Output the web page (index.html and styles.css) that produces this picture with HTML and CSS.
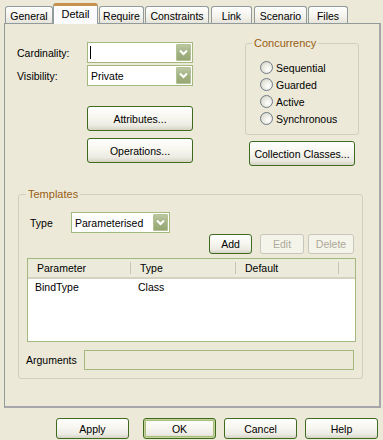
FILE: index.html
```html
<!DOCTYPE html>
<html lang="en">
<head>
  <meta charset="UTF-8">
  <title>Class Properties - Detail</title>
  <link rel="stylesheet" href="styles.css">
</head>
<body>
  <div class="dialog">
    <div class="tabs">
      <div class="tab t-general">General</div>
      <div class="tab t-detail active">Detail</div>
      <div class="tab t-require">Require</div>
      <div class="tab t-constraints">Constraints</div>
      <div class="tab t-link">Link</div>
      <div class="tab t-scenario">Scenario</div>
      <div class="tab t-files">Files</div>
    </div>

    <div class="panel">
      <div class="top">
        <div class="left">
          <div class="field">
            <span class="label">Cardinality:</span>
            <div class="combo wide">
              <span class="cursor"></span>
              <span class="drop"><svg width="15" height="17" viewBox="0 0 15 17"><path d="M4 6.5 L7.5 10 L11 6.5" fill="none" stroke="#fff" stroke-width="2"/></svg></span>
            </div>
          </div>
          <div class="field">
            <span class="label">Visibility:</span>
            <div class="combo wide">
              <span class="value">Private</span>
              <span class="drop"><svg width="15" height="17" viewBox="0 0 15 17"><path d="M4 6.5 L7.5 10 L11 6.5" fill="none" stroke="#fff" stroke-width="2"/></svg></span>
            </div>
          </div>
          <div class="side-btns">
            <button class="btn big">Attributes...</button>
            <button class="btn big">Operations...</button>
          </div>
        </div>

        <div class="right">
          <fieldset class="group concurrency">
            <legend>Concurrency</legend>
            <div class="radio"><span class="dot"></span>Sequential</div>
            <div class="radio"><span class="dot"></span>Guarded</div>
            <div class="radio"><span class="dot"></span>Active</div>
            <div class="radio"><span class="dot"></span>Synchronous</div>
          </fieldset>
          <button class="btn big coll">Collection Classes...</button>
        </div>
      </div>

      <fieldset class="group templates">
        <legend>Templates</legend>
        <div class="type-row">
          <span class="type-label">Type</span>
          <div class="combo narrow">
            <span class="value">Parameterised</span>
            <span class="drop"><svg width="15" height="17" viewBox="0 0 15 17"><path d="M4 6.5 L7.5 10 L11 6.5" fill="none" stroke="#fff" stroke-width="2"/></svg></span>
          </div>
        </div>
        <div class="list-btns">
          <button class="btn small b-add">Add</button>
          <button class="btn small b-edit" disabled>Edit</button>
          <button class="btn small b-delete" disabled>Delete</button>
        </div>
        <div class="list">
          <div class="list-head">
            <div class="col c1">Parameter</div>
            <div class="col c2">Type</div>
            <div class="col c3">Default</div>
            <div class="col c4"></div>
          </div>
          <div class="list-row">
            <div class="cell c1">BindType</div>
            <div class="cell c2">Class</div>
          </div>
        </div>
        <div class="args-row">
          <span class="args-label">Arguments</span>
          <div class="args-field"></div>
        </div>
      </fieldset>
    </div>

    <div class="footer">
      <button class="btn foot b-apply">Apply</button>
      <button class="btn foot default">OK</button>
      <button class="btn foot">Cancel</button>
      <button class="btn foot">Help</button>
    </div>
  </div>
</body>
</html>
```

FILE: styles.css
```css
:root {
  --face: #ece9d8;
  --tab-border: #919b9c;
  --btn-border: #3d6b1f;
  --field-border: #a4b97f;
  --group-border: #d0d0bf;
  --group-text: #985d13;
}
body {
  margin: 0;
  background: var(--face);
  font-family: 'Liberation Sans', Arial, sans-serif;
  font-size: 10.5px;
  color: #000;
}
.dialog {
  width: 383px;
  height: 440px;
  padding: 4px 2px 0 4px;
  box-sizing: border-box;
}

/* tabs */
.tabs {
  display: flex;
  align-items: flex-end;
  height: 19px;
  padding-left: 1px;
}
.tab {
  height: 17px;
  box-sizing: border-box;
  border: 1px solid var(--tab-border);
  border-bottom: none;
  border-radius: 3px 3px 0 0;
  background: linear-gradient(#ffffff, #f3f2ec 60%, #e6e4da);
  padding-top: 3px;
  text-align: center;
  margin-right: 1px;
}
.tab.active {
  height: 21px;
  margin-bottom: -1px;
  position: relative;
  z-index: 1;
  background: #fcfcfe;
  border-top: 3px solid #c6914f;
  padding-top: 2px;
  font-size: 11px;
}
.t-general { width: 48px; }
.t-detail { width: 45px; margin-left: -1px; }
.t-require { width: 45px; }
.t-constraints { width: 64px; }
.t-link { width: 41px; margin-left: 1px; }
.t-scenario { width: 53px; margin-left: 1px; }
.t-files { width: 40px; }

.panel {
  height: 385px;
  box-sizing: border-box;
  border: 1px solid var(--tab-border);
  border-right-width: 2px;
  border-bottom-width: 2px;
  border-right-color: #a7a6aa;
  border-bottom-color: #a7a6aa;
}

/* top area */
.top {
  display: flex;
  height: 141px;
}
.left {
  margin-left: 12px;
  margin-top: 18px;
  width: 176px;
}
.field {
  display: flex;
  align-items: center;
  height: 21px;
  margin-bottom: 2px;
}
.label {
  width: 70px;
}
.combo {
  height: 21px;
  box-sizing: border-box;
  border: 1px solid var(--field-border);
  background: #fff;
  display: flex;
  align-items: center;
  justify-content: space-between;
  padding-left: 2px;
}
.combo.wide { width: 106px; }
.combo.narrow { width: 99px; }
.cursor {
  width: 1px;
  height: 13px;
  background: #000;
}
.value {
  padding-left: 1px;
}
.drop {
  width: 15px;
  height: 17px;
  margin-right: 1px;
  border-radius: 2px;
  background: linear-gradient(#bfcaa6, #a3b383 50%, #94a672);
  box-shadow: inset 0 0 0 1px #b3c193;
}
.drop svg {
  display: block;
}

.side-btns {
  margin-left: 70px;
  margin-top: 20px;
  display: flex;
  flex-direction: column;
  gap: 7px;
}

/* buttons */
.btn {
  font: inherit;
  color: #000;
  padding: 0;
  box-sizing: border-box;
  border: 1px solid var(--btn-border);
  border-radius: 3px;
  background: linear-gradient(#ffffff, #f7f6ef 45%, #ecebe3 80%, #d6d2c4);
}
.btn.big {
  width: 106px;
  height: 25px;
}
.btn.small {
  height: 20px;
}
.btn:disabled {
  border-color: #c9c7ba;
  color: #aca899;
  background: #f5f4ea;
}

/* group boxes */
.group {
  margin: 0;
  border: 1px solid var(--group-border);
  border-radius: 3px;
  padding: 0;
}
.group legend {
  color: var(--group-text);
  padding: 0 2px;
  line-height: 13px;
  font-size: 11px;
}

.right {
  margin-left: 52px;
  margin-top: 13px;
}
.concurrency {
  width: 114px;
  height: 98px;
  box-sizing: border-box;
  padding: 9px 0 0 14px;
}
.concurrency legend {
  margin-left: -8px;
}
.radio {
  display: flex;
  align-items: center;
  height: 17px;
  gap: 3px;
}
.dot {
  width: 11px;
  height: 11px;
  border: 1px solid #6f7b86;
  border-radius: 50%;
  background: radial-gradient(circle at 65% 65%, #ffffff, #e7e6dd 55%, #c9c8bc);
}
.coll {
  margin-top: 6px;
  margin-left: 4px;
}

/* templates */
.templates {
  width: 345px;
  height: 191px;
  box-sizing: border-box;
  margin: 23px 0 0 13px;
  padding: 11px 6px 0 8px;
}
.templates legend {
  margin-left: -1px;
}
.type-row {
  display: flex;
  align-items: center;
  padding-left: 3px;
}
.type-label {
  width: 41px;
}
.list-btns {
  display: flex;
  justify-content: flex-end;
  margin-top: 1px;
  padding-right: 2px;
}
.b-add { width: 43px; }
.b-edit { width: 44px; margin-left: 8px; }
.b-delete { width: 46px; margin-left: 4px; }

.list {
  margin-top: 4px;
  height: 84px;
  box-sizing: border-box;
  border: 1px solid var(--field-border);
  background: #fff;
}
.list-head {
  display: flex;
  height: 18px;
  background: #ebeadb;
  border-bottom: 2px solid #d6d2c2;
}
.col {
  display: flex;
  align-items: center;
  padding-left: 9px;
  box-sizing: border-box;
  border-right: 1px solid #c7c5b2;
  margin: 3px 0;
}
.col.c1 { width: 103px; }
.col.c2 { width: 105px; }
.col.c3 { width: 103px; }
.col.c4 { border-right: none; flex: 1; }
.list-row {
  display: flex;
  height: 16px;
  align-items: center;
}
.cell {
  padding-left: 7px;
  box-sizing: border-box;
}
.cell.c1 { width: 103px; }

.args-row {
  display: flex;
  align-items: center;
  margin-top: 8px;
}
.args-label {
  width: 58px;
  margin-left: -1px;
}
.args-field {
  width: 270px;
  height: 20px;
  box-sizing: border-box;
  border: 1px solid var(--field-border);
}

/* footer */
.footer {
  display: flex;
  justify-content: flex-end;
  gap: 8px;
  margin-top: 10px;
  padding-right: 3px;
}
.btn.foot {
  width: 73px;
  height: 21px;
}
.b-apply {
  margin-right: 6px;
}
.btn.default {
  box-shadow: inset 0 0 0 1px #c6d29c, inset 0 0 0 2px #a9bd7d;
}
```
